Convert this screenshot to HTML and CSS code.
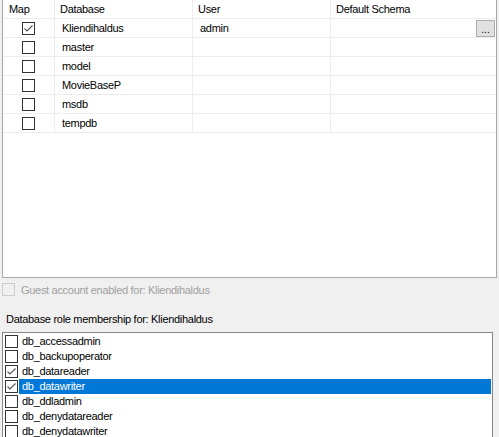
FILE: index.html
```html
<!DOCTYPE html>
<html>
<head>
<meta charset="utf-8">
<link rel="stylesheet" href="styles.css">
</head>
<body>
<div class="page">
  <div class="grid-box">
    <div class="row head">
      <div class="cell c-map">Map</div>
      <div class="cell">Database</div>
      <div class="cell">User</div>
      <div class="cell">Default Schema</div>
    </div>
    <div class="row">
      <div class="cell c-map"><span class="cb"><svg viewBox="0 0 11 11" width="11" height="11"><polyline points="1.5,5.5 4,8 9.5,2.5" fill="none" stroke="#555" stroke-width="1.1"/></svg></span></div>
      <div class="cell val">Kliendihaldus</div>
      <div class="cell val">admin</div>
      <div class="cell val schema"><span class="dots">...</span></div>
    </div>
    <div class="row">
      <div class="cell c-map"><span class="cb"></span></div>
      <div class="cell val">master</div>
      <div class="cell val"></div>
      <div class="cell val"></div>
    </div>
    <div class="row">
      <div class="cell c-map"><span class="cb"></span></div>
      <div class="cell val">model</div>
      <div class="cell val"></div>
      <div class="cell val"></div>
    </div>
    <div class="row">
      <div class="cell c-map"><span class="cb"></span></div>
      <div class="cell val">MovieBaseP</div>
      <div class="cell val"></div>
      <div class="cell val"></div>
    </div>
    <div class="row">
      <div class="cell c-map"><span class="cb"></span></div>
      <div class="cell val">msdb</div>
      <div class="cell val"></div>
      <div class="cell val"></div>
    </div>
    <div class="row">
      <div class="cell c-map"><span class="cb"></span></div>
      <div class="cell val">tempdb</div>
      <div class="cell val"></div>
      <div class="cell val"></div>
    </div>
  </div>

  <div class="guest">
    <span class="cb disabled"></span>
    <span class="guest-text">Guest account enabled for: Kliendihaldus</span>
  </div>

  <div class="role-label">Database role membership for: Kliendihaldus</div>

  <div class="list">
    <div class="item"><span class="cb"></span><span class="lbl">db_accessadmin</span></div>
    <div class="item"><span class="cb"></span><span class="lbl">db_backupoperator</span></div>
    <div class="item"><span class="cb"><svg viewBox="0 0 11 11" width="11" height="11"><polyline points="1.5,5.5 4,8 9.5,2.5" fill="none" stroke="#555" stroke-width="1.1"/></svg></span><span class="lbl">db_datareader</span></div>
    <div class="item"><span class="cb"><svg viewBox="0 0 11 11" width="11" height="11"><polyline points="1.5,5.5 4,8 9.5,2.5" fill="none" stroke="#555" stroke-width="1.1"/></svg></span><span class="lbl sel">db_datawriter</span></div>
    <div class="item"><span class="cb"></span><span class="lbl">db_ddladmin</span></div>
    <div class="item"><span class="cb"></span><span class="lbl">db_denydatareader</span></div>
    <div class="item"><span class="cb"></span><span class="lbl">db_denydatawriter</span></div>
  </div>
</div>
</body>
</html>
```

FILE: styles.css
```css
html, body {
  margin: 0;
  padding: 0;
  background: #f0f0f0;
}
body {
  width: 499px;
  height: 437px;
  overflow: hidden;
  font-family: "Liberation Sans", Arial, sans-serif;
  font-size: 11px;
  letter-spacing: -0.3px;
  color: #000;
}
.page {
  display: flex;
  flex-direction: column;
}
.grid-box {
  margin: -1px 0 0 2px;
  width: 493px;
  height: 277px;
  border: 1px solid #a9a9a9;
  background: #fff;
}
.row {
  display: grid;
  grid-template-columns: 52px 138px 138px 1fr;
  height: 19px;
}
.cell {
  border-right: 1px solid #ededed;
  border-bottom: 1px solid #ededed;
  display: flex;
  align-items: center;
  padding-left: 5px;
  white-space: nowrap;
}
.cell:last-child {
  border-right: none;
}
.cell.val {
  padding-left: 7px;
}
.cell.c-map {
  justify-content: center;
  padding-left: 0;
}
.head .cell.c-map {
  justify-content: flex-start;
  padding-left: 6px;
}
.schema {
  justify-content: flex-end;
  padding-right: 1px;
}
.dots {
  width: 17px;
  height: 15px;
  background: #e1e1e1;
  border: 1px solid #adadad;
  display: flex;
  align-items: flex-end;
  justify-content: center;
  line-height: 13px;
  font-size: 10px;
  letter-spacing: 0;
  margin-top: 1px;
}
.cb {
  width: 11px;
  height: 11px;
  border: 1px solid #333;
  background: #fff;
  display: inline-flex;
  align-items: center;
  justify-content: center;
  flex: none;
}
.cb svg {
  display: block;
}
.guest {
  display: flex;
  align-items: center;
  margin: 5px 0 0 2px;
  height: 13px;
}
.cb.disabled {
  border-color: #cccccc;
  background: #f0f0f0;
}
.guest-text {
  color: #a0a0a0;
  margin-left: 6px;
}
.role-label {
  margin: 17px 0 0 6px;
  height: 13px;
  line-height: 13px;
}
.list {
  margin: 6px 0 0 2px;
  width: 489px;
  height: 120px;
  border: 1px solid #828790;
  border-bottom: none;
  background: #fff;
  padding-top: 1px;
}
.item {
  display: flex;
  align-items: center;
  height: 15px;
}
.item .cb {
  margin-left: 2px;
}
.lbl {
  flex: 1;
  margin-left: 1px;
  margin-right: 1px;
  height: 15px;
  line-height: 15px;
  padding-left: 3px;
}
.lbl.sel {
  background: #0078d7;
  color: #fff;
}
```
